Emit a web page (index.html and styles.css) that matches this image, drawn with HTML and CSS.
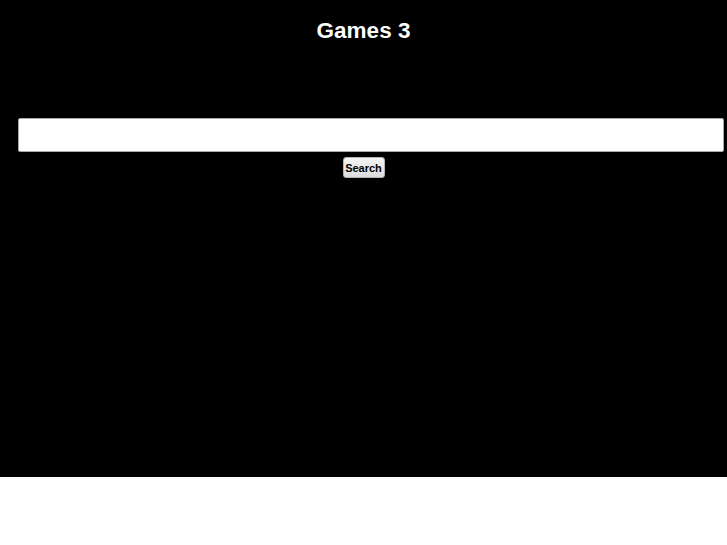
FILE: index.html
```html
<!DOCTYPE html>
<html>
<head>
<meta charset="utf-8">
<link rel="stylesheet" href="styles.css">
</head>
<body>
<div class="page">
  <h1 class="title">Games 3</h1>
  <form class="search">
    <input class="field" type="text">
    <button class="btn" type="button">Search</button>
  </form>
</div>
</body>
</html>
```
FILE: styles.css
```css
html, body { margin: 0; padding: 0; background: #fff; }
.page {
  background: #000;
  height: 477px;
  font-family: "Liberation Sans", Arial, sans-serif;
  padding-top: 18px;
  box-sizing: border-box;
}
.title {
  margin: 0;
  color: #fff;
  font-size: 22.5px;
  font-weight: bold;
  line-height: 26px;
  text-align: center;
}
.search {
  margin: 74px 0 0 0;
  display: flex;
  flex-direction: column;
  align-items: center;
}
.field {
  box-sizing: border-box;
  align-self: stretch;
  margin: 0 3px 0 18px;
  height: 34px;
  border: 1px solid #a9a9a9;
  border-radius: 2px;
  background: #fff;
}
.btn {
  margin-top: 5px;
  width: 42px;
  height: 21px;
  padding: 0;
  font-family: "Liberation Sans", Arial, sans-serif;
  font-size: 11px;
  font-weight: bold;
  color: #000;
  border: 1px solid #b5b5b5;
  border-radius: 3px;
  background: linear-gradient(#f4f4f4, #dcdcdc);
}
```
